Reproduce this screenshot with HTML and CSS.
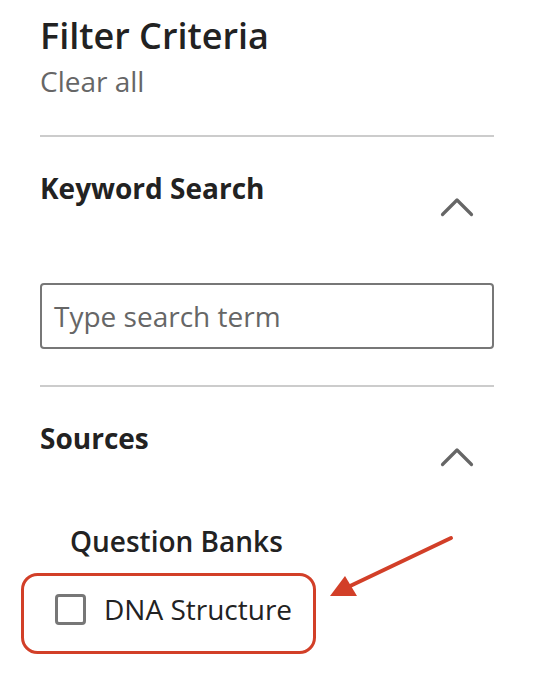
FILE: index.html
```html
<!DOCTYPE html>
<html>
<head>
<meta charset="utf-8">
<link rel="stylesheet" href="styles.css">
</head>
<body>
<div class="panel">
  <div class="header">
    <h1 class="title">Filter Criteria</h1>
    <a class="clear">Clear all</a>
  </div>
  <div class="section">
    <div class="section-head">
      <h2 class="section-title">Keyword Search</h2>
      <svg class="chevron" width="34" height="20" viewBox="0 0 34 20"><path d="M2.5 17.5 L17 3 L31.5 17.5" fill="none" stroke="#666" stroke-width="3.2" stroke-linecap="round" stroke-linejoin="round"/></svg>
    </div>
    <div class="search"><span class="placeholder">Type search term</span></div>
  </div>
  <div class="section sources">
    <div class="section-head">
      <h2 class="section-title">Sources</h2>
      <svg class="chevron" width="34" height="20" viewBox="0 0 34 20"><path d="M2.5 17.5 L17 3 L31.5 17.5" fill="none" stroke="#666" stroke-width="3.2" stroke-linecap="round" stroke-linejoin="round"/></svg>
    </div>
    <div class="group">
      <h3 class="group-title">Question Banks</h3>
      <label class="option"><span class="box"></span><span class="option-text">DNA Structure</span></label>
    </div>
  </div>
</div>
<svg class="annotation" width="535" height="692" viewBox="0 0 535 692">
  <rect x="22.5" y="574.5" width="292" height="78" rx="15" fill="none" stroke="#d23f28" stroke-width="3"/>
  <line x1="451" y1="538" x2="348" y2="587" stroke="#d23f28" stroke-width="4" stroke-linecap="round"/>
  <polygon points="330,596 345,576 357,596" fill="#d23f28"/>
</svg>
</body>
</html>
```
FILE: styles.css
```css
html, body {
  margin: 0;
  padding: 0;
  background: #fff;
}
body {
  font-family: "Open Sans", "Liberation Sans", sans-serif;
  color: #222;
  position: relative;
  width: 535px;
  height: 692px;
  overflow: hidden;
}
.panel {
  width: 454px;
  padding: 12px 0 0 40px;
}
.header {
  display: flex;
  flex-direction: column;
  padding-bottom: 35px;
  border-bottom: 2px solid #ccc;
}
.title {
  margin: 0;
  font-size: 36px;
  font-weight: 600;
  line-height: 48px;
  color: #222;
}
.clear {
  font-size: 28px;
  color: #666;
  line-height: 38px;
  margin-top: 2px;
}
.section {
  padding-top: 32px;
  padding-bottom: 36px;
  border-bottom: 2px solid #ccc;
}
.sources {
  border-bottom: none;
}
.section-head {
  display: flex;
  justify-content: space-between;
  align-items: flex-start;
}
.section-title {
  margin: 0;
  font-size: 28px;
  font-weight: 700;
  line-height: 38px;
  color: #222;
}
.chevron {
  margin-top: 28px;
  margin-right: 20px;
}
.search {
  box-sizing: border-box;
  margin-top: 66px;
  height: 66px;
  border: 2px solid #777;
  border-radius: 4px;
  display: flex;
  align-items: center;
  padding-left: 12px;
}
.placeholder {
  font-size: 28px;
  color: #666;
  line-height: 38px;
}
.group {
  padding-left: 30px;
  margin-top: 55px;
}
.group-title {
  margin: 0;
  font-size: 28px;
  font-weight: 600;
  line-height: 38px;
  color: #222;
}
.option {
  display: flex;
  align-items: center;
  margin-top: 30px;
  margin-left: -15px;
  gap: 18px;
}
.box {
  width: 25px;
  height: 25px;
  border: 3px solid #777;
  border-radius: 4px;
}
.option-text {
  font-size: 28px;
  line-height: 38px;
  color: #222;
}
.annotation {
  position: absolute;
  left: 0;
  top: 0;
  pointer-events: none;
}
```
